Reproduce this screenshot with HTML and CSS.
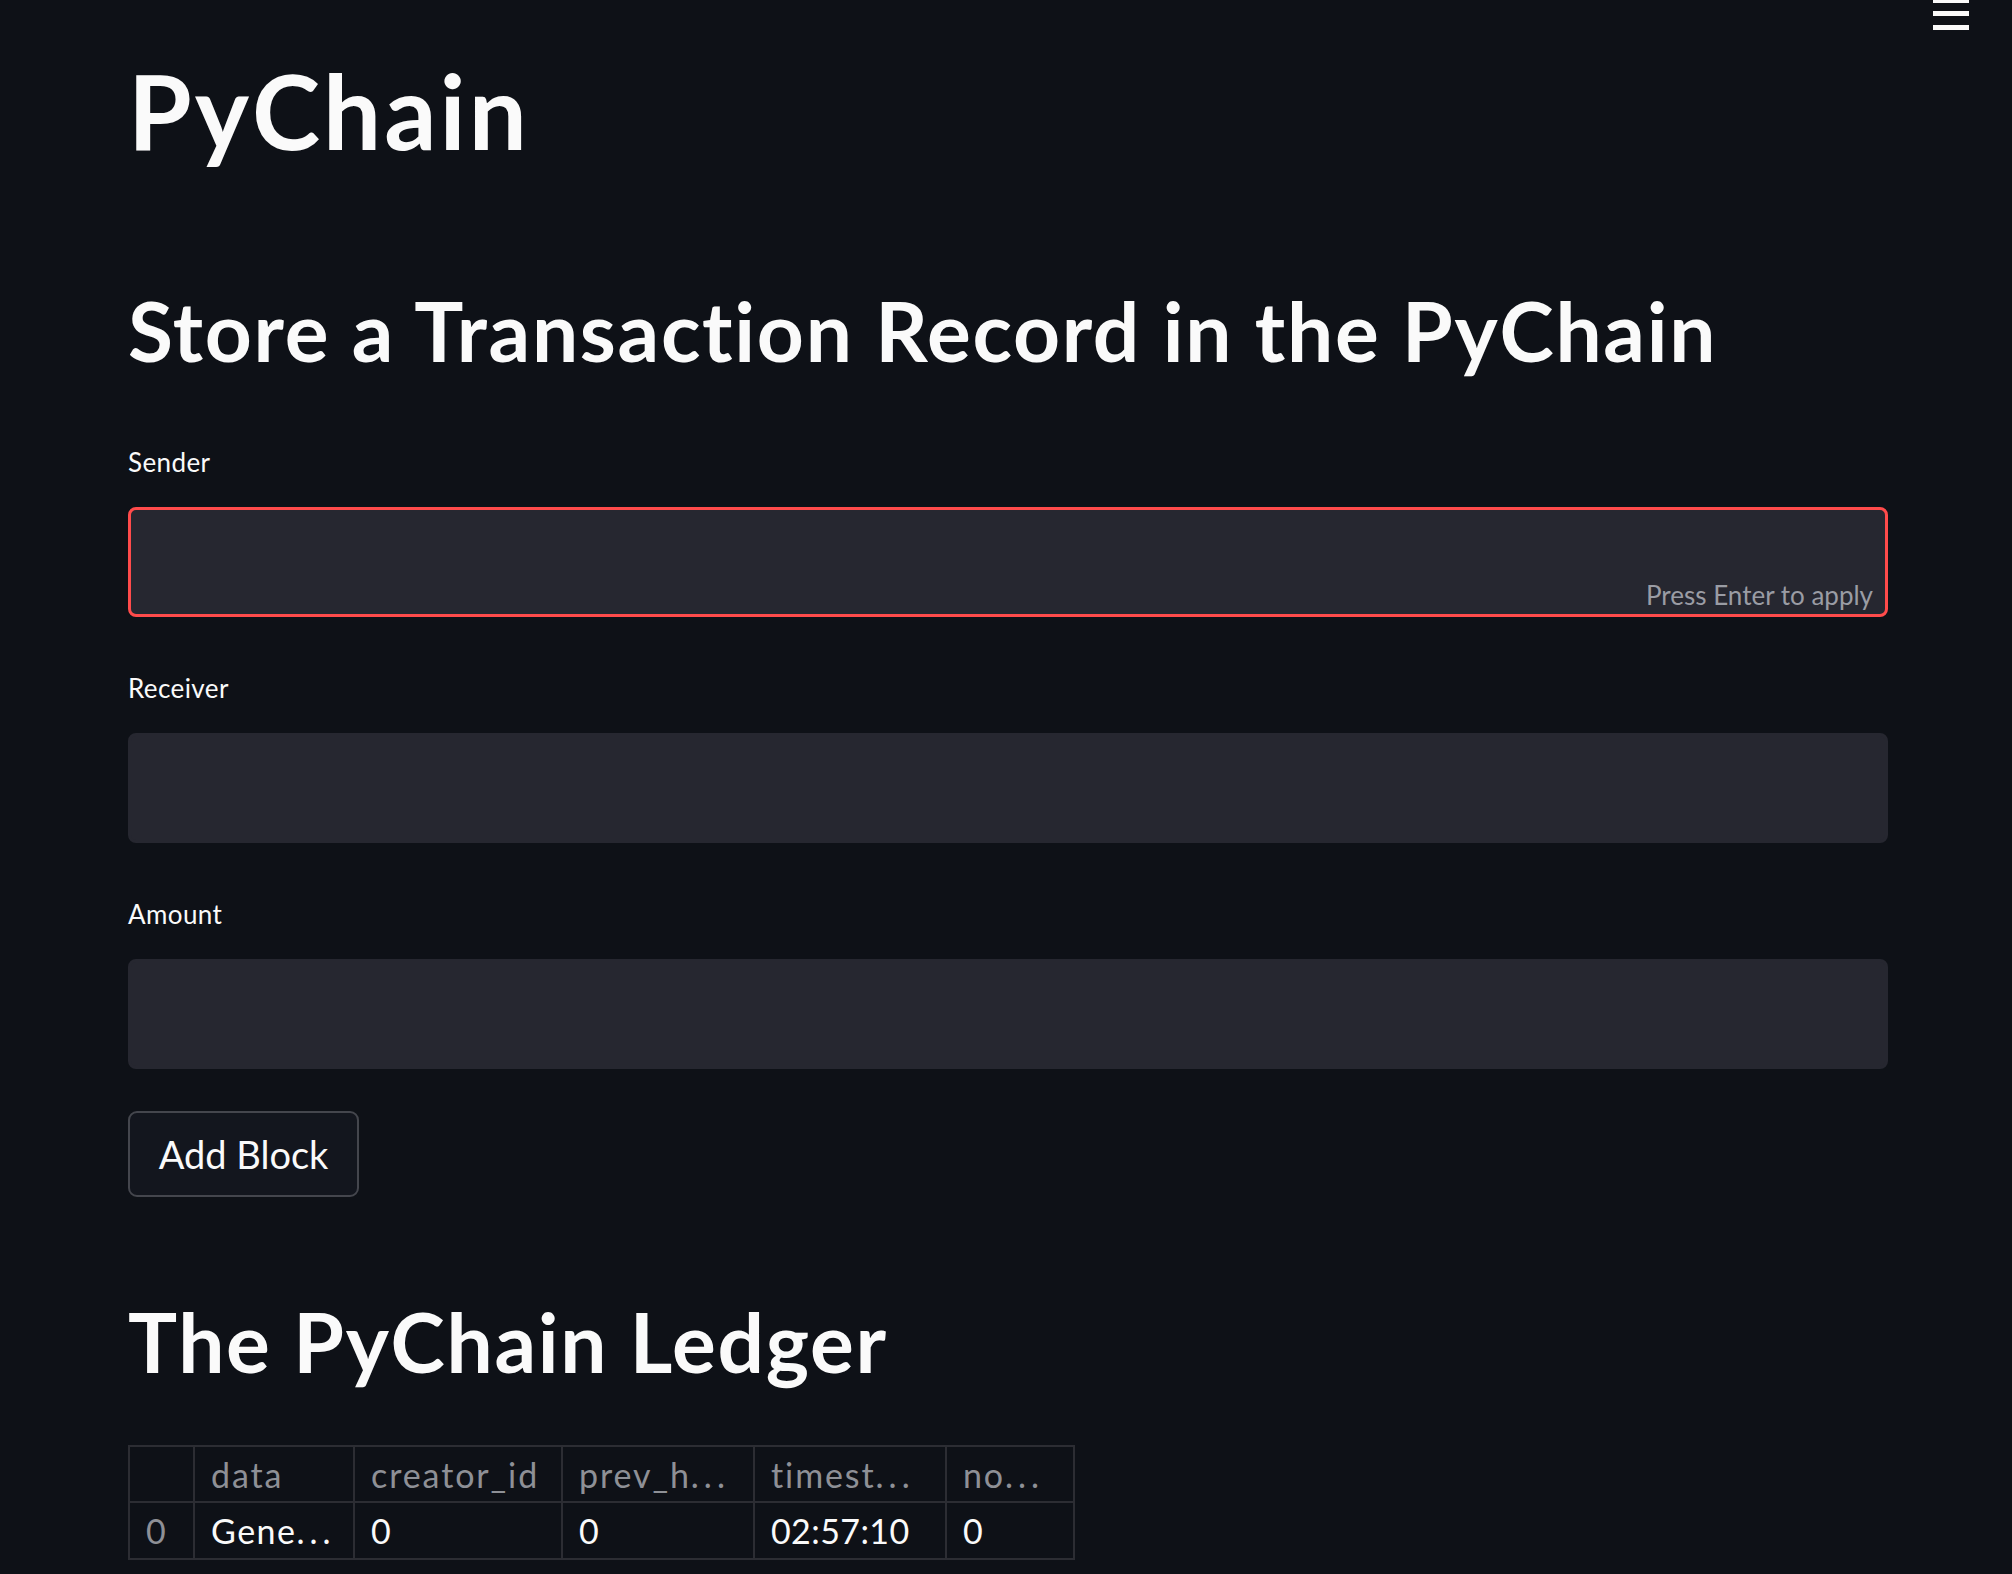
FILE: index.html
```html
<!DOCTYPE html>
<html lang="en">
<head>
<meta charset="utf-8">
<title>PyChain</title>
<link rel="stylesheet" href="styles.css">
</head>
<body>
<button class="menu" aria-label="Main menu">
  <svg width="36" height="32" viewBox="0 0 36 32"><rect x="0" y="-2" width="36" height="5" fill="#fafafa"/><rect x="0" y="11" width="36" height="5" fill="#fafafa"/><rect x="0" y="25" width="36" height="5" fill="#fafafa"/></svg>
</button>
<main class="main">
  <h1 class="title">PyChain</h1>
  <h2 class="heading">Store a Transaction Record in the PyChain</h2>

  <div class="field">
    <label class="label">Sender</label>
    <div class="input input-focus"><span class="hint">Press Enter to apply</span></div>
  </div>
  <div class="field">
    <label class="label">Receiver</label>
    <div class="input"></div>
  </div>
  <div class="field">
    <label class="label">Amount</label>
    <div class="input"></div>
  </div>

  <button class="btn">Add Block</button>

  <h2 class="heading ledger">The PyChain Ledger</h2>

  <div class="grid">
    <div class="cell head c0"></div>
    <div class="cell head c1">data</div>
    <div class="cell head c2">creator_id</div>
    <div class="cell head c3">prev_h<span class="ell">...</span></div>
    <div class="cell head c4">timest<span class="ell">...</span></div>
    <div class="cell head c5">no<span class="ell">...</span></div>
    <div class="cell idx c0">0</div>
    <div class="cell text c1">Gene<span class="ell">...</span></div>
    <div class="cell c2">0</div>
    <div class="cell c3">0</div>
    <div class="cell c4">02:57:10</div>
    <div class="cell c5">0</div>
  </div>
</main>
</body>
</html>
```
FILE: styles.css
```css
html, body {
  margin: 0;
  padding: 0;
  background: #0e1117;
  color: #fafafa;
  font-family: Lato, "Noto Sans", sans-serif;
  font-variant-ligatures: none;
}

.menu {
  position: absolute;
  top: 0;
  right: 43px;
  padding: 0;
  border: 0;
  background: transparent;
  line-height: 0;
}

.main {
  width: 1760px;
  padding: 59px 0 0 128px;
  display: flex;
  flex-direction: column;
  align-items: flex-start;
}

.title {
  margin: 0;
  font-size: 103px;
  line-height: 102px;
  font-weight: 700;
  letter-spacing: 3px;
}

.heading {
  margin: 128px 0 0 0;
  font-size: 82px;
  line-height: 82px;
  font-weight: 700;
  letter-spacing: 1.7px;
}

.field {
  width: 100%;
  display: flex;
  flex-direction: column;
  margin-top: 58px;
}

.heading + .field {
  margin-top: 78px;
}

.label {
  font-size: 26px;
  line-height: 26px;
  margin-bottom: 32px;
  letter-spacing: 0.4px;
}

.input {
  box-sizing: border-box;
  height: 110px;
  width: 100%;
  background: #262730;
  border: 3px solid #262730;
  border-radius: 8px;
  display: flex;
  align-items: flex-end;
  justify-content: flex-end;
}

.input-focus {
  border-color: #ff4b4b;
}

.hint {
  font-size: 26px;
  line-height: 26px;
  color: #9a9ca4;
  padding: 0 12px 6px 0;
}

.btn {
  margin-top: 42px;
  box-sizing: border-box;
  height: 86px;
  width: 231px;
  background: #13161e;
  border: 2px solid #44464d;
  border-radius: 9px;
  color: #fafafa;
  font-family: Lato, "Noto Sans", sans-serif;
  font-size: 38px;
  padding: 0;
}

.ledger {
  margin-top: 103px;
}

.grid {
  margin-top: 63px;
  display: grid;
  grid-template-columns: 65px 160px 208px 192px 192px 128px;
  grid-template-rows: 56px 57px;
  border-top: 2px solid #2c2d33;
  border-left: 2px solid #2c2d33;
  box-sizing: border-box;
}

.cell {
  box-sizing: border-box;
  border-right: 2px solid #2c2d33;
  border-bottom: 2px solid #2c2d33;
  padding: 0 0 0 16px;
  font-size: 34px;
  letter-spacing: 0.4px;
  display: flex;
  align-items: center;
  white-space: nowrap;
  overflow: hidden;
  color: #fafafa;
}

.head {
  letter-spacing: 1.9px;
}

.text {
  letter-spacing: 1.5px;
}

.ell {
  letter-spacing: 5px;
}

.head, .idx {
  color: #8e9096;
}
```
